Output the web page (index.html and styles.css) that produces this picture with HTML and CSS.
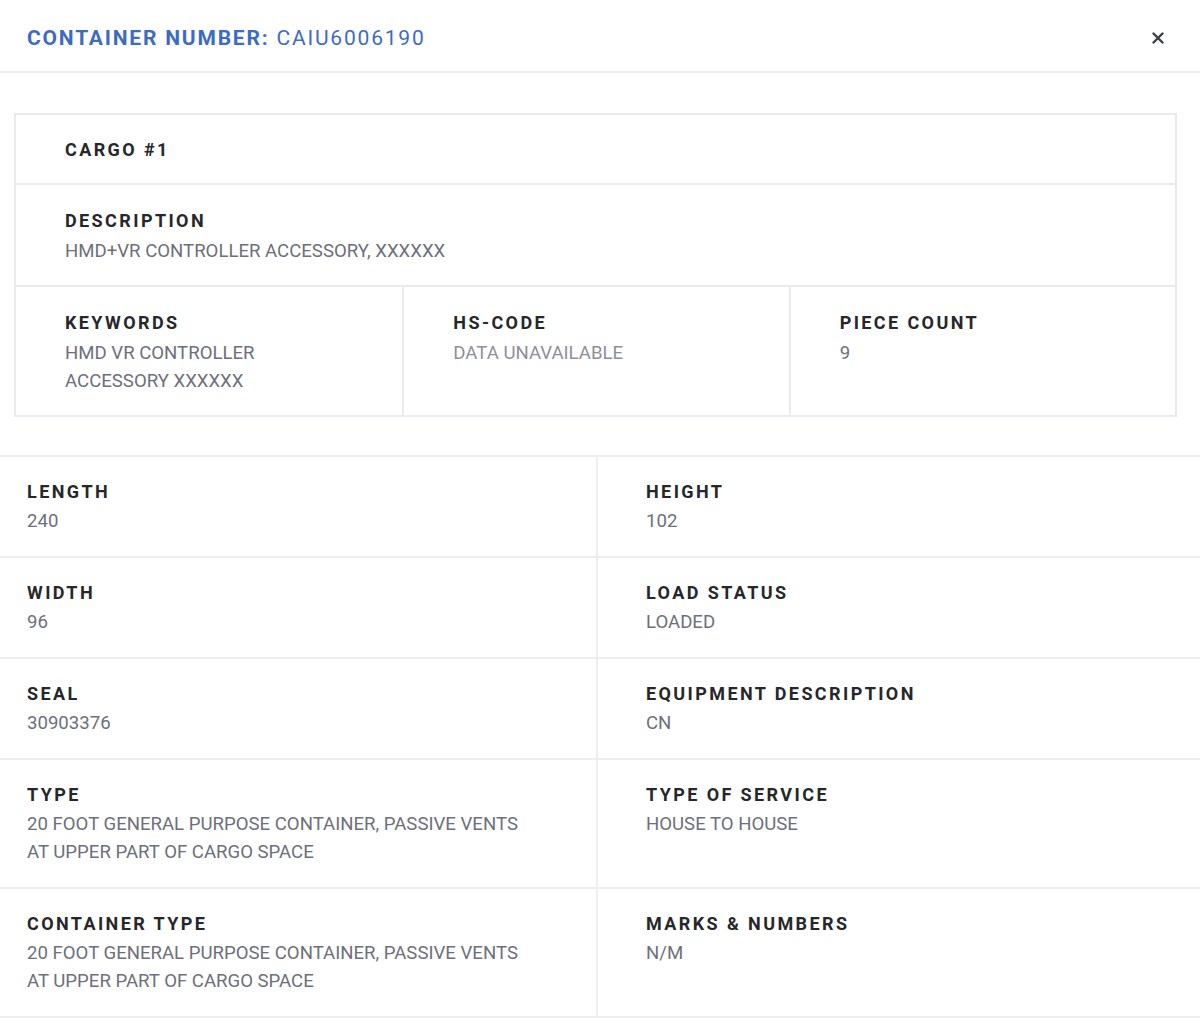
FILE: index.html
```html
<!DOCTYPE html>
<html>
<head>
    <title>Container CAIU6006190</title>
    <link rel="stylesheet" href="styles.css">
</head>
<body>
    <div class="modal">
        <div class="modal-header">
            <h2 class="modal-title"><strong>CONTAINER NUMBER:</strong> CAIU6006190</h2>
            <button class="close-btn" aria-label="Close">
                <svg width="12" height="12" viewBox="0 0 12 12">
                    <path d="M1.5 1.5 L10.5 10.5 M10.5 1.5 L1.5 10.5" stroke="#3d3f46" stroke-width="2.4" stroke-linecap="round"/>
                </svg>
            </button>
        </div>

        <div class="cargo-box">
            <div class="cargo-title">CARGO #1</div>
            <div class="cargo-row">
                <div class="field">
                    <h4>DESCRIPTION</h4>
                    <p>HMD+VR CONTROLLER ACCESSORY, XXXXXX</p>
                </div>
            </div>
            <div class="cargo-row cargo-cols">
                <div class="field">
                    <h4>KEYWORDS</h4>
                    <p>HMD VR CONTROLLER<br>ACCESSORY XXXXXX</p>
                </div>
                <div class="field">
                    <h4>HS-CODE</h4>
                    <p class="muted">DATA UNAVAILABLE</p>
                </div>
                <div class="field">
                    <h4>PIECE COUNT</h4>
                    <p>9</p>
                </div>
            </div>
        </div>

        <div class="details-grid">
            <div class="cell">
                <h4>LENGTH</h4>
                <p>240</p>
            </div>
            <div class="cell">
                <h4>HEIGHT</h4>
                <p>102</p>
            </div>
            <div class="cell">
                <h4>WIDTH</h4>
                <p>96</p>
            </div>
            <div class="cell">
                <h4>LOAD STATUS</h4>
                <p>LOADED</p>
            </div>
            <div class="cell">
                <h4>SEAL</h4>
                <p>30903376</p>
            </div>
            <div class="cell">
                <h4>EQUIPMENT DESCRIPTION</h4>
                <p>CN</p>
            </div>
            <div class="cell">
                <h4>TYPE</h4>
                <p class="wrap">20 FOOT GENERAL PURPOSE CONTAINER, PASSIVE VENTS AT UPPER PART OF CARGO SPACE</p>
            </div>
            <div class="cell">
                <h4>TYPE OF SERVICE</h4>
                <p>HOUSE TO HOUSE</p>
            </div>
            <div class="cell">
                <h4>CONTAINER TYPE</h4>
                <p class="wrap">20 FOOT GENERAL PURPOSE CONTAINER, PASSIVE VENTS AT UPPER PART OF CARGO SPACE</p>
            </div>
            <div class="cell">
                <h4>MARKS &amp; NUMBERS</h4>
                <p>N/M</p>
            </div>
        </div>
    </div>
</body>
</html>
```

FILE: styles.css
```css
body {
    margin: 0;
    background: #ffffff;
    font-family: Roboto, "Liberation Sans", sans-serif;
    color: #26272b;
}
.modal {
    width: 1200px;
    background: #ffffff;
}
.modal-header {
    display: flex;
    align-items: center;
    justify-content: space-between;
    height: 71px;
    padding: 0 36px 0 27px;
    border-bottom: 2px solid #eceef3;
}
.modal-title {
    margin: 5px 0 0 0;
    font-size: 21px;
    font-weight: 400;
    letter-spacing: 1.8px;
    color: #3d6bc4;
}
.modal-title strong {
    font-weight: 700;
}
.close-btn {
    border: none;
    background: none;
    padding: 0;
    cursor: pointer;
    display: flex;
    margin-top: 4px;
}
.cargo-box {
    margin: 40px 23px 0 14px;
    border: 2px solid #e8eaf0;
}
.cargo-title {
    height: 68px;
    display: flex;
    align-items: center;
    padding: 0 49px;
    font-size: 18px;
    font-weight: 700;
    letter-spacing: 2.4px;
    border-bottom: 2px solid #e8eaf0;
}
.cargo-row {
    border-bottom: 2px solid #e8eaf0;
}
.cargo-row:last-child {
    border-bottom: none;
}
.cargo-row .field {
    padding: 24px 49px 20px 49px;
}
.cargo-cols {
    display: grid;
    grid-template-columns: 1fr 1fr 1fr;
}
.cargo-cols .field + .field {
    border-left: 2px solid #e8eaf0;
}
h4 {
    margin: 0;
    font-size: 18px;
    line-height: 24px;
    font-weight: 700;
    letter-spacing: 2.4px;
    color: #26272b;
}
p {
    margin: 4px 0 0 0;
    font-size: 18.6px;
    line-height: 28px;
    color: #6d707b;
}
p.muted {
    color: #8e9099;
}
.details-grid {
    margin-top: 38px;
    display: grid;
    grid-template-columns: 598px 1fr;
    border-top: 2px solid #eceef3;
}
.cell {
    padding: 23px 27px 21px 48px;
    border-bottom: 2px solid #eceef3;
}
.cell:nth-child(odd) {
    padding-left: 27px;
    border-right: 2px solid #eceef3;
}
.cell p {
    margin-top: 3px;
}
.cell p.wrap {
    max-width: 505px;
}
```
